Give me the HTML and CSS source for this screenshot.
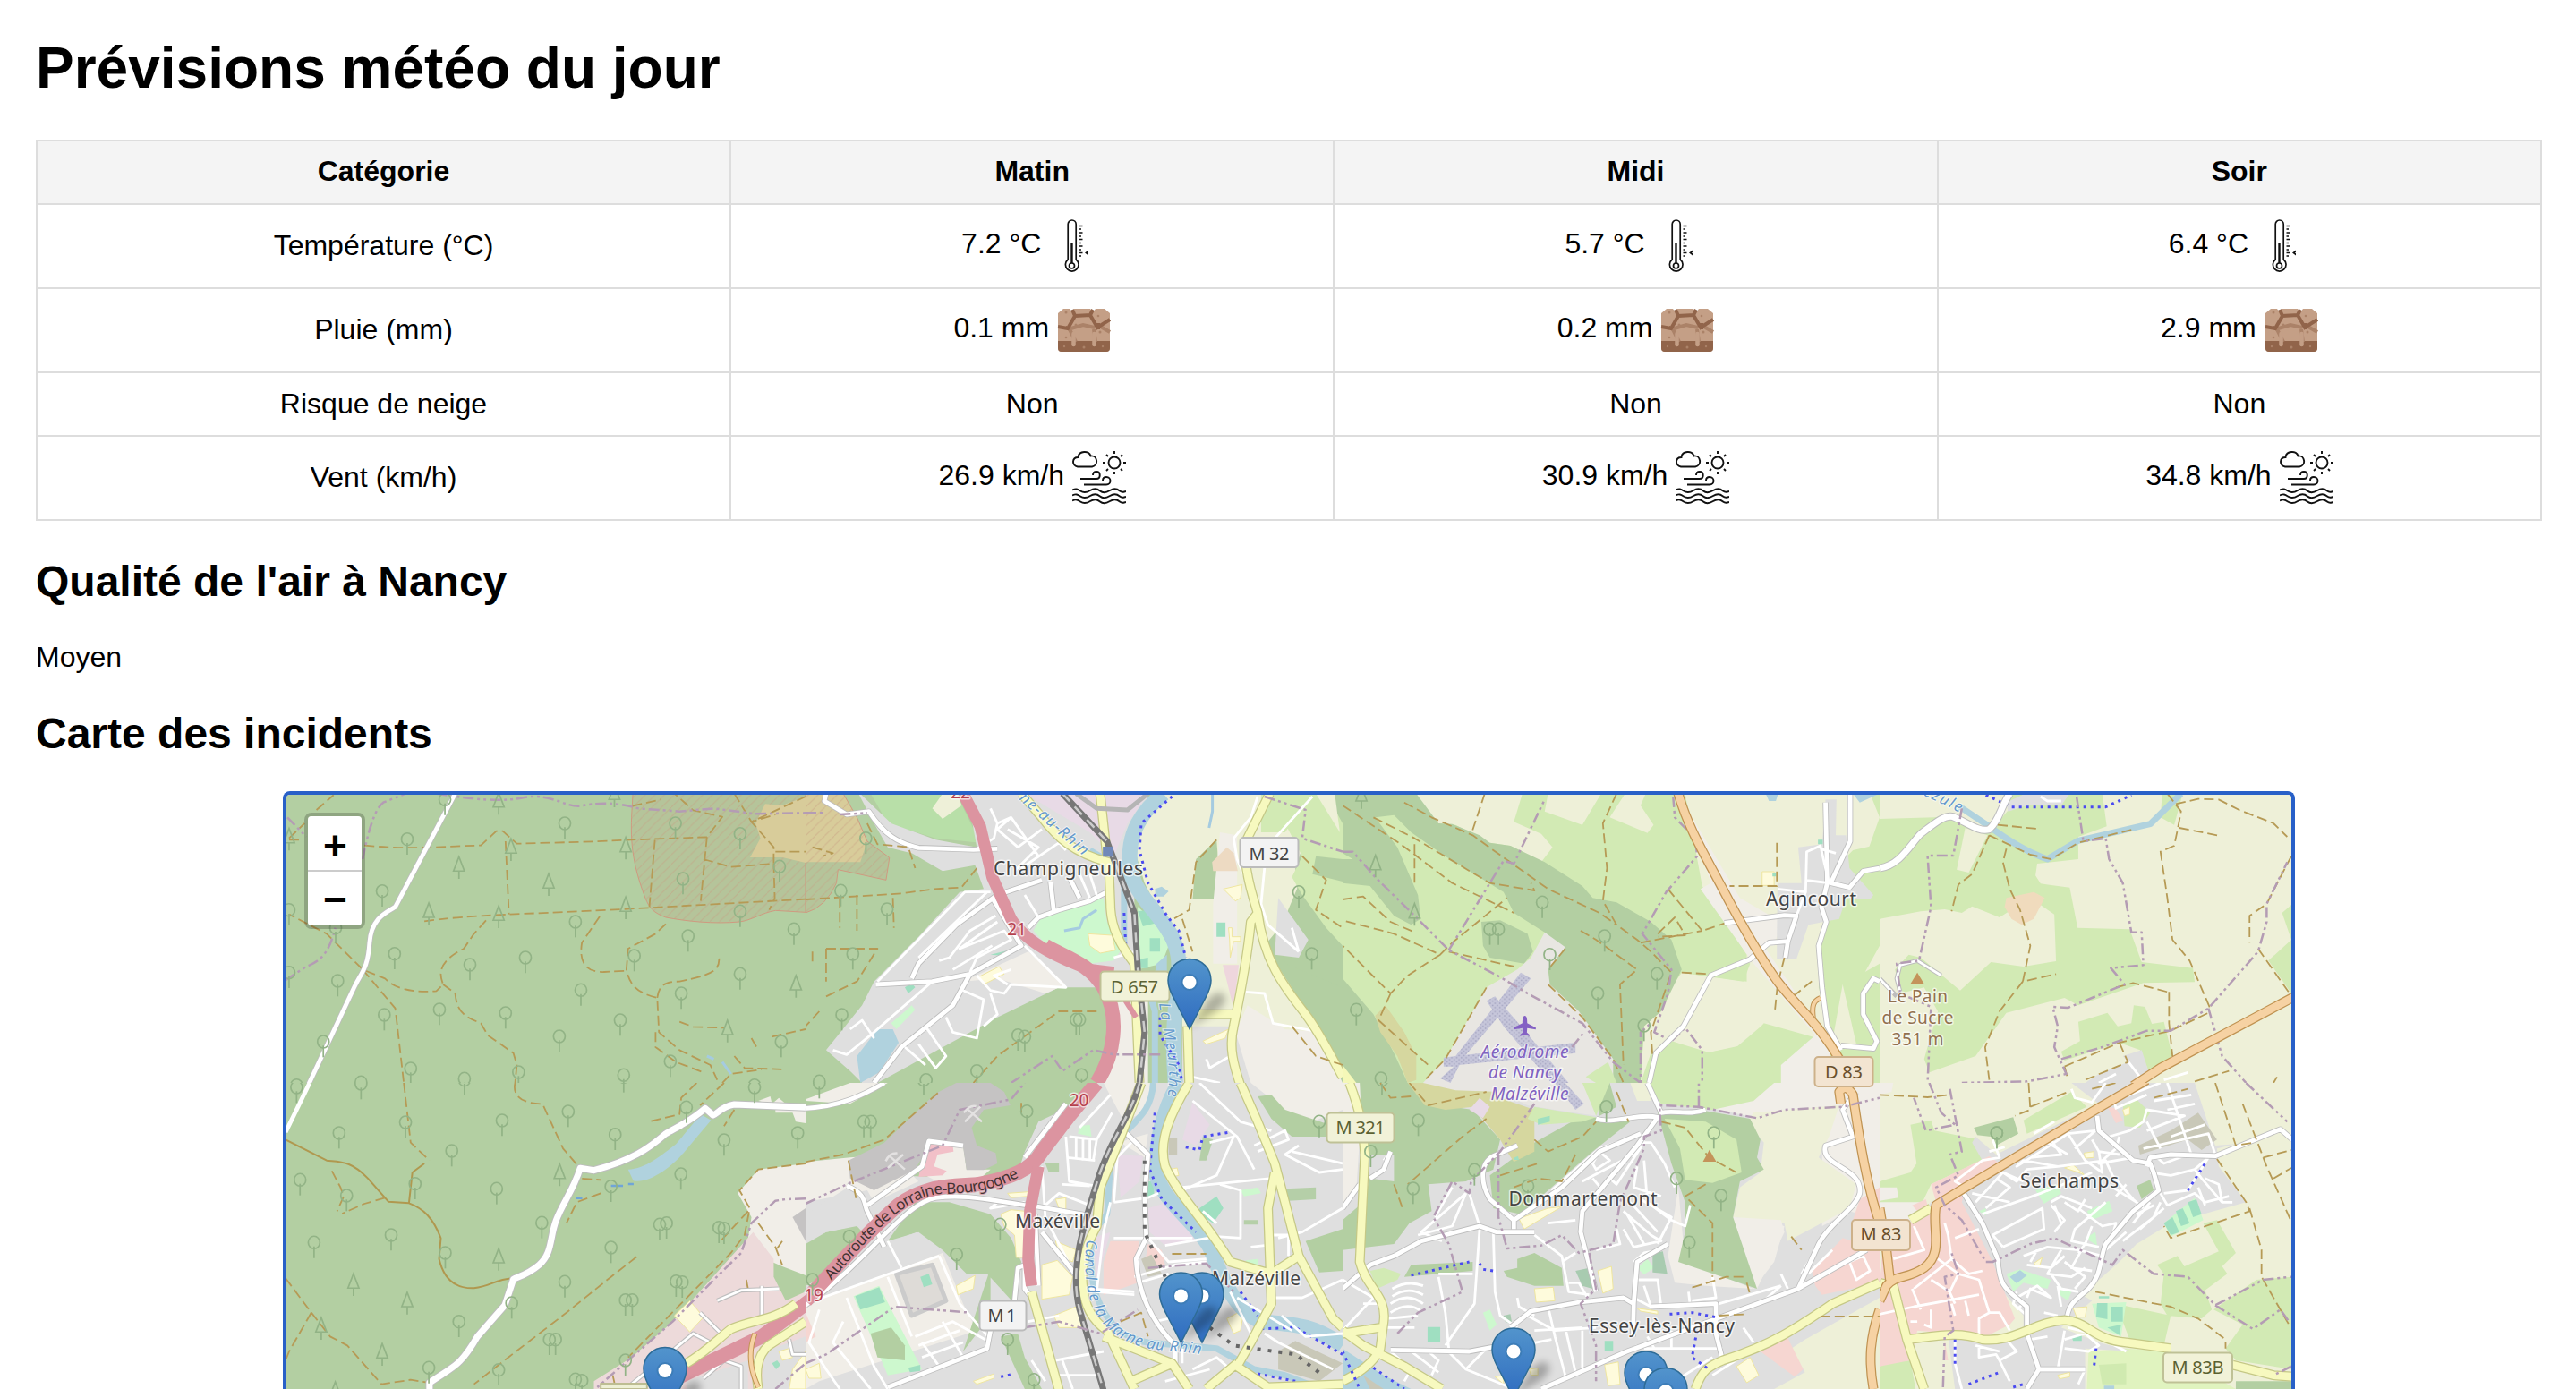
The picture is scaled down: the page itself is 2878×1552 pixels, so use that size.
FILE: index.html
```html
<!DOCTYPE html>
<html lang="fr">
<head>
<meta charset="utf-8">
<title>Prévisions météo du jour</title>
<link rel="stylesheet" href="styles.css">
</head>
<body>
<svg class="sprite" aria-hidden="true">
  <defs>
    <symbol id="thermo" viewBox="1.5 0 60 60">
      <g fill="none" stroke="#111" stroke-width="1.7">
        <path d="M22.7 45V5.500a4.500 4.500 0 0 1 9 0V45a7.300 7.300 0 1 1-9 0z"/>
        <circle cx="27" cy="52" r="3"/><path d="M27 26v23" stroke-width="2.400"/>
        <path d="M35 7.500h4M35 11h2.500M35 15h4M35 19h2.500M35 22.500h4M35 26.500h2.500M35 30h4M35 34h2.500M35 37.500h4M35 41h2.500"/>
      </g>
      <path d="M41.500 37.500l4-3v2.200l-1 .8 1 .8v2.200z" fill="#111"/>
    </symbol>
    <symbol id="soil" viewBox="0 0 60 60">
      <path d="M1 11L7 6H53L59 11V50a4 4 0 0 1-4 4H5a4 4 0 0 1-4-4z" fill="#c49f86"/>
      <path d="M1 42H59V50a4 4 0 0 1-4 4H5a4 4 0 0 1-4-4z" fill="#91644a"/>
      <path d="M14 6h5l-2 4zM37 6h6l-3 4z" fill="#fff"/>
      <path d="M13 27l8 16M41 29l2 14M12 29l17-5 13 3M47 25l12 7" fill="none" stroke="#ab8268" stroke-width="4"/>
      <path d="M1 26l11 2 8-14 17-1 8 14 14-9M20 14l-3-7M37 13l3-6M12 26l-2 3M46 22v7" fill="none" stroke="#91644a" stroke-width="4"/>
      <path d="M18.500 34v12M41.500 34v12" stroke="#c49f86" stroke-width="4.500" stroke-linecap="round"/>
      <g fill="#ab8268"><circle cx="10" cy="10" r="1.500"/><circle cx="46" cy="14" r="1.300"/><circle cx="21" cy="24" r="1.500"/><circle cx="48" cy="32" r="1.500"/><circle cx="10" cy="38" r="1.300"/><circle cx="8" cy="48" r="1.200"/><circle cx="30" cy="49" r="1.500"/><circle cx="51" cy="48" r="1.200"/></g>
    </symbol>
    <symbol id="wind" viewBox="0 0 60 60">
      <g fill="none" stroke="#111" stroke-width="1.900">
        <path d="M6 17.500C-1 16-.5 7 6.500 7C7-.5 19-1 20.500 5.500C28 4.500 30 16 22 17.500z"/>
        <circle cx="47" cy="13" r="6.500"/>
        <path d="M47 0v3M47 23v3M34 13h3M57 13h3M38 4l2 2M56 4l-2 2M38 22l2-2M56 22l-2-2M9 31H27c5 0 5-8 0-8q-4 0-4 4M13 37.500H38c6 0 6-8.500 0-8.500q-4 0-4 4"/>
        <path id="wave" d="M0 43.500c4-2 6-1 9 1s7 2 11-.5 8-2 11 .5 7 2 11-.5 8-2 11 .5 4 1 7 .5"/>
        <use href="#wave" y="6"/><use href="#wave" y="12"/>
      </g>
    </symbol>
    <linearGradient id="pin" x2="0" y2="1"><stop offset="0" stop-color="#5294cc"/><stop offset="1" stop-color="#2f6cc0"/></linearGradient>
    <filter id="soft" x="-1" y="-1" width="3" height="3"><feGaussianBlur stdDeviation="4"/></filter>
    <marker id="tree" markerUnits="userSpaceOnUse" markerWidth="60" markerHeight="100" refX="30" refY="40" overflow="visible"><ellipse cx="30" cy="40" rx="17" ry="21" class="tree"/><path d="M30 53v39" class="tree"/></marker>
    <marker id="fir" markerUnits="userSpaceOnUse" markerWidth="60" markerHeight="100" refX="30" refY="40" overflow="visible"><path d="M30 12L14 60H46zM30 60v26" class="tree"/></marker>
    <pattern id="hatch" width="28" height="32" patternUnits="userSpaceOnUse"><path d="M-4 36L32-4" stroke="#c89c80" stroke-opacity=".45" stroke-width="3"/></pattern>
    <pattern id="apron" width="14" height="14" patternUnits="userSpaceOnUse"><path d="M0 0h14v14H0z" fill="#c6c6da"/><path d="M2 2h4v4H2zM9 9h4v4H9z" fill="#a4a4c0"/></pattern>
  </defs>
</svg>

<h1>Prévisions météo du jour</h1>
<table class="forecast">
  <colgroup><col class="label-col"><col><col><col></colgroup>
  <thead><tr><th>Catégorie</th><th>Matin</th><th>Midi</th><th>Soir</th></tr></thead>
  <tbody>
    <tr class="tall"><td>Température (°C)</td><td>7.2 °C <svg class="icon"><use href="#thermo"/></svg></td><td>5.7 °C <svg class="icon"><use href="#thermo"/></svg></td><td>6.4 °C <svg class="icon"><use href="#thermo"/></svg></td></tr>
    <tr class="tall"><td>Pluie (mm)</td><td>0.1 mm <svg class="icon"><use href="#soil"/></svg></td><td>0.2 mm <svg class="icon"><use href="#soil"/></svg></td><td>2.9 mm <svg class="icon"><use href="#soil"/></svg></td></tr>
    <tr><td>Risque de neige</td><td>Non</td><td>Non</td><td>Non</td></tr>
    <tr class="tall"><td>Vent (km/h)</td><td>26.9 km/h <svg class="icon"><use href="#wind"/></svg></td><td>30.9 km/h <svg class="icon"><use href="#wind"/></svg></td><td>34.8 km/h <svg class="icon"><use href="#wind"/></svg></td></tr>
  </tbody>
</table>
<h2>Qualité de l'air à Nancy</h2>
<p>Moyen</p>
<h2>Carte des incidents</h2>

<div class="map">
<svg class="map-canvas" viewBox="320 888 2240 664">

<!-- north-west: forest -->
<svg class="tile" x="300" y="870" width="600" height="340" viewBox="0 0 1568 1020" preserveAspectRatio="none">
  <path class="forest" d="M0 0H1568V1020H0z"/>
  <path class="quarry" d="M1066 0H1568V448L1480 442C1440 450 1410 475 1375 480C1300 488 1220 478 1160 465C1125 450 1112 435 1100 400C1060 280 1055 200 1062 90z"/>
  <path d="M1066 0H1568V448L1480 442C1440 450 1410 475 1375 480C1300 488 1220 478 1160 465C1125 450 1112 435 1100 400C1060 280 1055 200 1062 90z" fill="url(#hatch)" stroke="#cf9a80" stroke-width="1"/>
  <path d="M1568 60L1500 90L1450 85L1422 150L1436 200L1406 264H1500L1568 282z" fill="#d8cc9a"/>
  <path class="trail" d="M280 224C420 240 540 225 620 224L665 176H684L725 218C850 214 950 212 1040 206L1280 196L1325 128L1240 106L1185 50M692 210L702 455M455 478C600 455 750 455 1030 438L1568 404M635 475L600 520L570 570C500 610 495 650 510 690L490 712C420 718 370 705 340 670L275 640L170 520L60 455M510 690L545 720C550 790 580 800 620 820L640 860L715 920L725 960L720 1020M275 640L370 770L395 1020M967 462L915 550C905 620 930 650 980 648L1050 644M1160 487L1130 520L1050 570L1045 640C1055 700 1085 720 1135 735L1140 850L1200 910L1290 960L1310 1010M1135 735C1140 690 1160 680 1200 680C1280 660 1320 650 1315 600M1130 850L1130 900L1190 950L1270 985M1200 815L1240 832L1330 835M1410 870L1425 900M1360 930L1390 970L1510 975M1325 1020L1350 990L1440 975M1470 865L1568 840M1128 206L1112 430M1280 196L1262 410M1270 270L1350 296L1475 285V230L1410 145L1568 60M1475 285L1478 400L1462 440M1360 50L1410 145L1480 120M140 105L190 55M60 205L100 205M60 200L105 150M1062 92L1145 70M1480 245H1568"/>
  <path class="limit" d="M55 130L110 195M50 675L110 630C160 610 180 570 195 500M275 270C290 180 310 100 335 80L400 50M490 50C600 70 680 80 750 62C830 50 860 95 910 92C960 80 1010 78 1080 100L1200 110L1300 100L1420 118L1568 115"/>
  <defs><path id="ra" d="M545 50L370 430C340 450 300 470 295 550C290 640 270 650 250 700L115 1030"/></defs><use href="#ra" class="case minor"/><use href="#ra" class="road minor"/>
  <path class="stream" d="M1280 930L1300 940M1325 950L1350 990"/>
  <path class="trees" d="M515 70L405 203L865 150L1188 150L1377 185L332 377L60 440L196 500L368 587L588 624L750 600L896 480L1210 336L1492 295L1377 445L1225 528L1068 594L1534 505L1377 655L912 709L1205 720L202 678L60 650L338 792L499 774L692 786L1027 810L849 864L160 882L1497 882L1173 948L415 972L270 1018L572 1006L730 984L1037 994L82 1028L1419 1028"/>
  <path class="firs" d="M672 75L60 195L708 230L1043 225L556 290L818 347L468 445L672 455L1043 425L1540 688L1340 838L1010 50"/>
</svg>

<!-- Champigneulles -->
<svg class="tile" x="900" y="870" width="600" height="340" viewBox="0 0 1568 1020" preserveAspectRatio="none">
  <path class="forest" d="M0 0H1568V1020H0z"/>
  <path class="quarry" d="M0 50H110L150 130L180 210L245 265L235 340L95 305L90 350Q60 430 0 450z"/>
  <path d="M0 50H110L150 130L180 210L160 280H0z" fill="#d8cc9a"/><path d="M0 50H110L150 130L180 210L245 265L235 340L95 305L90 350Q60 430 0 450z" fill="url(#hatch)" stroke="#cf9a80"/>
  <path fill="#b8dfa8" d="M190 50H440L510 215L380 200L240 150z"/>
  <path class="farm" d="M400 50H445L455 90L400 135L370 100z"/>
  <path class="urban" d="M150 40L250 150L380 205L500 230L470 40H1000L960 330L960 700L740 700L560 800L210 1020H165L130 980L60 910L165 760L200 680L330 530L450 380L520 370L495 290L400 310L310 250L240 230L200 150z"/>
  <path class="indus" d="M640 50H1000L940 150L900 260L830 180z"/>
  <path class="land" d="M460 680L650 580L760 690L700 720L560 670z"/>
  <path class="farm" d="M1030 50H1568V260L1460 200L1430 300L1440 420L1340 560L1470 790L1500 1020H1100V600L990 350L950 200z"/>
  <path class="forest" d="M1200 205L1212 380L1208 405H1130L1140 270zM1450 50H1568V700L1400 620L1380 520L1460 300z"/>
  <path class="grass" d="M1330 50H1480L1400 180L1330 180zM1400 150L1470 50H1520L1568 150V560L1520 500L1450 390L1420 330L1450 260z"/>
  <path class="forest" d="M1490 260L1568 270V345L1480 320z"/>
  <path class="farm" d="M1490 50H1545L1560 180z"/>
  <path class="land" d="M1210 180L1260 190V620H1190L1190 420zM1120 840H1260L1290 760L1400 840L1500 850L1568 1020H1120zM910 750L1000 740V1020H870z"/>
  <path class="urban" d="M1100 830H1250L1300 1020H1100zM1380 400L1468 540L1440 600L1370 590z"/>
  <path fill="#eddac2" d="M1230 230L1250 250L1262 310H1190L1187 280z"/><path fill="#eed6dd" d="M1218 625H1265L1250 770z"/>
  <path class="park" d="M665 510L690 460L800 420L870 400L880 480L930 560L900 610L830 620L730 590zM970 430L1020 480L1060 560L1040 620L970 640z"/>
  <path class="school" d="M825 520L895 525L905 575L860 585L830 560zM1220 370L1275 355L1270 400L1255 410zM1235 500H1245V530H1270V545H1250L1240 600L1238 540zM505 665L565 630L580 655L520 690zM1160 880L1235 840L1225 870L1170 890z"/>
  <path class="pitch" d="M970 445L1000 440L1020 485L985 495zM1005 535H1035V580H1005zM975 605L1000 600V635H980zM1200 482H1226V530H1200zM540 590L610 570L620 560L590 595zM290 700L310 685L320 700L300 720z"/>
  <path class="park" d="M250 820L310 760L320 775L265 840z"/>
  <path class="water" d="M210 840H255L272 885L215 985L160 1020L150 930zM1025 620L1055 590V650H1020zM1020 370L1040 362L1060 378L1045 395L1022 395z"/>
  <path class="river" d="M1045 50C960 130 930 220 955 330C970 400 1060 480 1080 560C1110 650 1060 760 1080 1020"/>
  <path class="canal" d="M830 240L930 310V580M1000 700L1020 780V1020"/>
  <path class="stream" d="M850 440L810 470L800 500L755 510M1188 50V110L1178 165"/>
  <path class="cycle" d="M1070 60L980 150L975 240L1000 350L1055 460L1090 510L1110 600M930 450L935 560L960 640M1035 800V860L1090 960L1100 1020"/>
  <defs><path id="rb" d="M60 50L55 75L120 120L185 110C230 190 270 215 330 232L490 238L560 235M690 340L560 390L440 490L330 620L310 670M205 690L370 680L480 655L630 560L545 400M480 655L430 760L280 900L200 1020M650 500L680 465L740 440L830 410L880 380M715 345L725 445M770 330L800 400"/></defs><use href="#rb" class="case minor"/><use href="#rb" class="road minor"/>
  <path class="lane" d="M540 100L560 150L600 130L680 260M560 150L550 200L500 235M600 130L560 170L620 230L690 170M630 300L740 215L760 240M590 170L680 230L610 310M540 380H465L210 680M530 380L330 600M640 390L680 465M800 320L830 400M830 320L850 390M555 460L480 510L420 600L390 610M560 480L450 570L580 510L600 540L500 600L480 650M545 560L430 640M640 560L760 700L600 690L580 720L540 710L500 660M600 640L550 660L590 690M370 680L200 850L120 925L80 910M130 840L165 810L200 870M460 710L520 740L500 870L430 850L410 800M540 720L560 790L520 830M350 830L410 930L380 970L330 890M290 900L350 960M900 600L960 580M1320 60L1300 130L1250 200L1260 270L1290 350M1480 60L1370 200L1340 300L1330 420L1350 490L1440 580M1420 500L1440 580M1285 715L1340 720L1365 820L1480 845M1170 940L1180 970L1240 930M1130 1000L1210 1020"/>
  <defs><path id="yb" d="M630 50L690 130C730 190 780 250 885 280L890 420C890 500 920 560 960 620L975 1020M860 50L880 260M1355 50L1290 200C1275 260 1290 340 1320 450C1340 620 1400 700 1460 790C1500 850 1530 920 1568 1000M1320 450L1300 480C1290 600 1270 720 1250 830C1235 900 1250 960 1270 1030M1115 830L1120 1020M1150 790H1250"/></defs><use href="#yb" class="casey mid"/><use href="#yb" class="yel mid"/>
  <path class="motor" d="M460 50L510 160L545 330L600 470C650 560 760 610 830 640L900 650"/><path class="motor wide" d="M700 560C760 600 830 620 870 700C920 800 900 930 850 1020"/><path class="motor thin" d="M910 700L965 800"/>
  <path class="rail" d="M750 50L880 210L920 330L960 450L970 640L990 850L975 1020"/><path class="raildash" d="M750 50L880 210L920 330L960 450L970 640L990 850L975 1020"/>
  <path class="grayrail" d="M790 50L850 100L940 105L1000 50"/><path fill="#7088b8" d="M868 228H898V262H868z"/>
  <path class="trail" d="M0 405L280 385L375 370L455 365L500 300M180 150L210 220L300 230L320 300M100 400V500M150 390V510M255 400L258 500M20 580V620M60 570V680M60 570H210L150 680L60 730M40 780L0 830M1200 205L1140 280L1120 440L1075 470M1100 470L1130 580M1450 260L1520 340L1490 440L1568 500M850 780L740 780L560 930L490 1020M1420 830L1490 930L1568 960M20 230L80 250L50 260"/>
  <path class="limit" d="M0 115H60M100 120L180 115M600 1020L720 930L750 980L840 910L900 925H1040M1340 60L1460 105L1450 200L1568 245"/>
  <path class="trees" d="M103 376L238 438L138 588L106 792L176 200L1440 380L1478 588L640 865L620 860L800 808L790 808L500 980L806 994L40 1015L352 1010"/>
</svg>

<!-- plateau de Malzéville, Agincourt -->
<svg class="tile" x="1500" y="870" width="600" height="340" viewBox="0 0 1568 1020" preserveAspectRatio="none">
  <path class="grass" d="M0 0H1568V1020H0z"/>
  <path class="farm" d="M210 50H525L500 145L580 185L613 230L580 280L490 225L430 215L330 155L280 150L210 90zM600 50H755L700 155L590 110zM825 50H885L870 90L908 155L890 182L780 130zM1000 50H1540L1568 130L1500 350L1568 480V620L1460 690L1500 890L1450 890L1230 820L1180 890L1060 920L960 880L900 920L870 1020L880 830L990 650L1180 680L1180 590L1050 360z"/>
  <path class="grass" d="M1440 300L1490 240L1568 220V560L1510 680L1460 690L1430 880L1390 700L1400 500zM1050 360L1160 580L1190 620L1170 680L990 650L970 545L1115 480zM1230 822L1262 1020H900L960 880L1070 918L1150 900z"/>
  <path class="land" d="M1000 90L1160 400L1280 480L1260 560L1230 560L1430 900L1400 1020H1280V960L1380 860L1200 620L1045 370L1075 350z"/>
  <path class="forest" d="M0 50H215L280 150L320 152L400 190L430 215L490 225L590 280L700 360L730 400L800 415L900 480L960 540L990 640L930 780L880 830L870 1020H800L700 830L600 690L590 640L645 570L590 515L500 450L470 380L300 260L200 180L150 122L95 130L160 230L220 390L228 470L200 490L150 460L80 360L0 350V270L30 270L0 250zM405 480L460 475L540 520L556 580L530 620L430 600L410 560zM0 670L90 790L150 920L190 1020H0z"/>
  <path fill="#d6d79f" d="M95 795L125 760L180 850L215 930V1010L190 1020L160 930L110 850z"/>
  <path d="M0 960L40 1020H0z" fill="#f5f8b8"/>
  <path class="aero" d="M590 515L650 565L600 640L605 690L690 780L790 940V1020H235L300 940L400 740L420 700L510 640L550 600z"/>
  <path class="grass" d="M775 950L800 1020H740L710 1000z"/>
  <path fill="url(#apron)" d="M520 650L550 670L350 940L315 1020L285 1005L325 965L295 965V935L330 930zM420 745L445 730L510 815L660 1020H610L470 830z M330 930L680 885V920L340 960z"/>
  <path class="urban" d="M1410 70H1442L1440 190L1470 190L1480 300L1550 390L1540 405L1470 400L1450 470L1360 490L1325 605H1268V530L1270 350H1340L1330 230L1400 220z"/>
  <path class="school" d="M1225 312H1260V358H1225z"/><path class="pitch" d="M1388 205H1402V220H1388zM1255 315H1266V328H1255z"/>
  <path class="water" d="M1235 50H1272L1265 75H1245zM1490 50H1568L1510 80z"/>
  <path class="trail" d="M415 50L378 178M0 90L170 220L320 350L500 450M180 80L260 130L380 190L440 240L600 370L750 450L800 490M800 50L760 150L772 300L760 410L800 490L860 540L900 580L960 650L900 850L905 930M90 130L210 200L430 350L560 375L550 350M210 220V350M0 405L60 395L140 480L210 515M10 478L150 520L285 590L320 550L480 400M285 590L190 660L140 720L0 560M140 720L105 810L250 960M310 580L500 630M950 370L1050 510L1115 485M920 520L970 465L1000 525L920 530M870 550L1050 510M990 650L1075 655M695 510L740 540L860 640L810 690L820 960M1268 215V360H1130M1290 600L1270 690L1262 780M1315 730L1380 670M420 700L400 740L300 940L240 1010M600 690L700 800L790 940L820 1020M650 570L600 640"/>
  <path class="limit" d="M0 245L30 245L95 330L215 465L310 575L460 665L540 720L700 820L790 950L870 1020V850L900 820M310 575L430 350L470 275L500 285L590 70M965 60L970 130L1030 200L1035 260L945 380L875 520L960 640L950 720L910 850L960 880L1000 835L1050 910V1020M670 900L705 850"/>
  <defs><path id="rc" d="M1115 484L1290 458L1325 460L1300 545L1293 600M1300 545L1245 550L1190 605L1075 660L995 830L915 920L895 1020M1482 50V210L1425 350L1480 365L1520 310L1568 300M1410 80L1415 350M1415 350L1398 430L1412 480L1390 560L1400 700L1415 830L1455 910M1455 895L1550 905L1560 880L1520 790V720L1550 670L1568 680"/></defs><use href="#rc" class="case minor"/><use href="#rc" class="road minor"/>
  <path class="lane" d="M1350 340L1420 350L1395 225L1355 245L1352 380L1325 460M1270 370L1350 380M1395 235L1440 250"/>
  <path class="caseo thinr" d="M1375 810C1368 760 1375 745 1395 735"/><path class="orange thinr" d="M1375 810C1368 760 1375 745 1395 735"/>
  <defs><path id="oc" d="M980 50C1010 170 1060 260 1110 370C1160 480 1220 600 1270 680C1330 770 1390 820 1450 940"/></defs><use href="#oc" class="caseo mid"/><use href="#oc" class="orange mid"/>
  <path d="M532 795c6 0 7 12 7 25l25 15v6l-25-5-1 15 8 8v4l-14-4-14 4v-4l8-8-1-15-25 5v-6l25-15c0-13 1-25 7-25z" fill="#8461c4"/>
  <path class="trees" d="M583 415L765 528L745 720L918 655L40 775L430 505L455 505L880 828L112 1005L605 590"/><path class="firs" d="M55 55L96 285L210 447"/>
</svg>

<!-- Le Pain de Sucre -->
<svg class="tile" x="2100" y="870" width="600" height="340" viewBox="0 0 1568 1020" preserveAspectRatio="none">
  <path class="farm" d="M0 0H1568V1020H0z"/>
  <path class="grass" d="M0 135L160 130L220 120L320 180L380 100L360 50H650L663 160L580 195L580 270L460 285L455 325L470 352L555 365L578 500L730 505L765 615L915 635L920 682L770 685L580 760L540 735L370 785L280 930L145 985L130 940L170 780L130 700L60 720L45 640L85 590L120 600L235 710L325 615L420 630L515 612L510 455L440 400L350 465L270 428L240 450L190 438L120 445L0 470zM825 50H885L860 155L820 130zM580 815L665 785L695 830L735 820L742 760L775 765L795 822L830 815L855 930L785 980L760 910L700 885L540 945L530 915L585 880zM1175 450L1205 420V725L1135 610L1202 540z"/>
  <path class="farm" d="M250 165L315 190L260 315L225 305z"/>
  <path fill="#f0dbbd" d="M370 400L450 380L482 400L450 470L415 490L385 470L365 430z"/>
  <path class="urban" d="M425 50H555L530 90L430 90L375 110L370 80zM710 930L765 910L785 980L740 1020H600L640 990L725 950z"/>
  <path class="river narrow" d="M235 95L320 160C390 220 440 250 490 270L580 208L790 152L880 50"/>
  <path class="cycle" d="M310 55L385 95L660 95L735 55"/>
  <defs><path id="rd" d="M0 300C60 290 90 220 120 185C160 150 190 120 215 128C260 150 290 180 320 170C350 140 355 90 380 50"/></defs><use href="#rd" class="case mid"/><use href="#rd" class="road mid"/>
  <path class="case lane" d="M180 660L110 610L60 625L50 670L60 715M0 670L50 730"/><path class="lane" d="M180 660L110 610L60 625L50 670L60 715M0 670L40 720M470 60L490 75L530 75M640 1020L690 990M720 940L760 1000M830 1010L900 985"/>
  <path class="trail" d="M320 190L270 320L230 355L210 445M320 190L440 255L500 270L580 215L740 170M370 235L360 280L380 370L410 440L440 560L418 680L515 655M418 680L350 780L308 900L320 1010M840 50L880 110L870 170L860 225L820 245L840 400L855 540L905 610L965 770M875 165L995 192M865 85L930 68L990 70L1050 105L1150 150L1190 195M1202 260L1170 330L1130 420L1080 460V550M1105 570L1200 725M845 715V820L855 930M690 700L740 685L840 715M700 885L725 950L600 1010M540 965L700 885L850 845L960 785M540 965L550 1010M345 155L460 168M1160 1000L1150 1020M920 1015L1020 980"/>
  <path class="limit" d="M240 100L215 258H140L150 430L115 610L50 620L60 720L150 765L140 1020M575 60L595 210L660 200L670 270L710 350L735 515H765L770 625L675 635L715 690L550 768L505 765L520 830L510 900L545 990L430 1015L240 1020M530 940L650 900L780 845L850 845L960 770L1105 580L1130 480V420L1190 280M960 770L1000 930L1070 1020"/>
  <defs><path id="od" d="M740 1030L820 970L1225 722"/></defs><use href="#od" class="caseo mid"/><use href="#od" class="orange mid"/>
  <path class="peak" d="M110 650L131 690H89z"/>
</svg>

<!-- west: forest road -->
<svg class="tile" x="300" y="1210" width="600" height="342" viewBox="0 0 1568 1026" preserveAspectRatio="none">
  <path class="forest" d="M0 0H1568V1026H0z"/>
  <path class="land" d="M1568 270L1430 290L1370 370L1410 450L1395 560L1470 600L1500 615L1568 645z"/><path fill="#eddada" d="M1415 500L1475 590V650L1510 730L1568 700V1026H950V1000L1060 920L1180 800L1290 660z"/>
  <path class="land" d="M1430 60L1465 45L1470 70L1490 50L1510 70L1568 75V135L1540 130L1530 100H1480V75z"/>
  <path d="M1530 450L1568 420V530z" fill="#c5c3c3"/>
  <path class="urban" d="M1220 1000L1400 930L1400 1026H1220zM1450 900L1568 850V1026H1440z"/>
  <path class="school" d="M1185 780L1230 730L1270 785L1230 835zM1490 900L1520 890L1530 920L1500 930zM1530 960L1568 900V1026H1520z"/><path class="pitch" d="M1470 940L1485 930L1495 945L1482 960z"/>
  <path class="water" d="M1262 105L1292 125L1215 230C1180 280 1110 340 1065 328L1050 290C1100 290 1150 240 1190 205z"/>
  <path class="bluedash" d="M1000 345H1035M1050 339H1066M898 386H916"/>
  <path class="track" d="M50 190L170 260C210 265 240 260 290 320L350 398L410 403C450 420 480 450 503 520L498 590C510 650 540 690 600 688C650 680 660 660 712 655M410 403L420 300L455 270"/>
  <path class="trail" d="M395 0L415 200L470 260M720 0C710 50 750 70 800 70L860 220L905 280L905 320L970 325M970 370L900 400L870 470M185 295L210 350L220 380L200 430M340 385L280 405L215 438M1250 0L1205 50L1200 105L1110 130M1330 0L1260 75M1360 90L1330 145M1568 270L1430 290L1375 360L1405 420L1390 510L1350 570L1050 920M1075 583L1000 650L870 770L700 920L600 1010M50 655L125 770L60 900L50 930M125 770L180 850L230 880L330 1010L415 995L470 1005M1400 430L1320 530M1430 470L1480 550L1500 610M1500 530L1485 555M1395 660L1400 690M1005 980L1010 1005"/>
  <path class="limit" d="M1568 388L1510 390L1480 395L1410 470L1380 570L1300 660L1180 800L960 1020M1480 1026L1568 940"/>
  <path class="road minor" d="M50 165L120 0"/>
  <defs><path id="re" d="M1568 82L1360 72C1320 80 1310 105 1298 108L1275 85C1230 130 1190 150 1160 170C1110 220 1060 260 950 293L910 286C890 360 860 400 840 460C820 520 830 570 790 610C760 640 730 650 715 658L690 745L610 850C560 950 540 950 470 1005V1030"/></defs><use href="#re" class="case mid"/><use href="#re" class="road mid"/>
  <path class="lane case" d="M1310 730L1380 695L1490 690M1440 680V790M1260 770L1330 850M1060 1010L1240 840L1290 870M1520 860L1530 910L1568 910M1270 990L1330 930L1380 950V1026"/><path class="lane" d="M1310 730L1380 695L1490 690M1440 680V790M1260 770L1330 850M1060 1010L1240 840L1290 870M1520 860L1530 910L1568 910M1270 990L1330 930L1380 950V1026"/>
  <path class="motor wide" d="M1200 985L1440 850L1580 730"/>
  <defs><path id="ye" d="M1220 940C1280 900 1310 860 1350 825C1420 790 1470 800 1540 740M1430 1026C1420 960 1430 910 1460 880L1568 800"/></defs><use href="#ye" class="casey mid"/><use href="#ye" class="yel mid"/>
  <path class="caseo thinr" d="M1420 840C1400 900 1405 960 1430 1020"/><path class="orange thinr" d="M1420 840C1400 900 1405 960 1430 1020"/>
  <path d="M970 1008H1105V1026H970z" fill="#eef0d5" stroke="#bdbd92" stroke-width="2"/>
  <path class="trees" d="M82 15L270 3L572 -10L206 168L400 132L682 126L875 96L1037 -20L1220 82L1419 15L1012 173L1330 192L1545 168L535 228L92 325L228 378L428 338L666 355L1000 347L1204 306L798 469L1142 475L1162 470L1315 485L1330 488L133 535L358 510L516 570L1000 552L865 667L1190 665L1208 668L710 738L1042 728L1062 728L556 800L820 860L838 860L468 955L672 962L1042 930L896 994L915 998"/><path class="firs" d="M850 300L672 583L248 668L405 730L154 815L332 902L195 1030"/>
</svg>

<!-- Maxéville, Malzéville -->
<svg class="tile" x="900" y="1210" width="600" height="342" viewBox="0 0 1568 1026" preserveAspectRatio="none">
  <path class="urban" d="M0 0H1568V1026H0z"/>
  <path class="forest" d="M0 0H840L790 70L680 130L640 230L620 300L500 320L0 300z"/>
  <path class="land" d="M0 60L130 70L240 0H130L0 55zM0 265L130 250L250 240L330 330L200 400L180 360L0 400zM350 310L360 200L460 210L470 290L540 290L500 330L400 340zM0 740L400 570L460 740L500 830L40 1000L0 1026zM1300 0H1568V90L1480 130L1400 90zM940 190L1000 170L990 250L920 200zM870 0H1010L1000 90L930 130z"/>
  <path fill="#c5c3c3" d="M380 35L440 0H540L580 30L598 75L520 90L485 150L500 210L555 235L560 270L520 292H470L460 215L380 200L350 230L320 290L200 360L130 320L125 260L230 200L330 90z"/>
  <path fill="#f2c0c8" d="M345 240L365 205L430 210L432 230L385 240L375 280L412 295L400 310L330 315z"/>
  <path class="forest" d="M240 530L320 400L420 400L540 440L600 520L630 600L610 740L530 640L470 640L400 560L330 500zM0 540L60 500L150 480L190 530L70 640L0 680zM460 900L540 620V780zM570 850L620 840L640 920L690 1026H640zM1320 45L1360 40L1400 90L1530 140L1568 180H1420L1360 120zM1460 530L1568 490V630L1500 635z"/>
  <path class="urban" d="M230 540L325 500L360 580L270 620zM0 440L130 345L170 400L180 470L60 500L0 530z"/>
  <path class="indus" d="M910 240L985 245L975 330L920 385zM1000 420L1060 400L1150 520L1050 545L1005 500zM1130 65L1180 140L1140 210L1100 190zM840 520L890 500L850 660z"/>
  <path class="retail" d="M890 530L975 530L960 610L970 670L870 710V600zM1000 540L1040 560L1050 610H990zM0 770L30 850L0 870z"/>
  <path fill="#c9c8b8" d="M980 590L1010 575L1040 640L1000 650zM1380 900L1430 865L1568 940L1500 1000L1380 960zM1060 185H1085V240H1060z"/>
  <path class="school" d="M570 440L600 425L640 430V585H615L610 510L580 480zM690 610L735 595L780 650L770 710L690 725zM440 680L495 645L490 690L445 710zM725 780L790 750L820 790L800 820L740 820zM730 530L790 560L780 600L740 580zM1230 790L1280 760L1270 830L1250 840zM0 960L40 940L45 990L10 990zM490 1000L550 975V990L500 1010zM1060 290L1085 285L1090 310L1070 315zM730 390L760 385V430L740 420zM590 370L650 365V380L600 385z"/>
  <path class="park" d="M140 715L215 680L340 960L240 980L180 820zM1270 360L1320 350L1330 370L1280 380zM800 145L830 140L835 180L795 170zM1285 595L1320 590V610L1290 615z"/>
  <path class="forest" d="M190 840L250 820L290 880V930L210 920z"/>
  <path class="pitch" d="M145 715L215 685L232 735L160 760zM335 650L360 640L370 675L345 685zM990 330H1018V380H990zM1150 420L1200 380L1220 420L1190 470L1150 440zM300 955L335 945V965L305 970z"/>
  <path fill="#b5cfa8" d="M1400 355L1490 350V390L1410 395zM700 270H740V300H710zM1280 460H1320V475H1280zM1160 180L1190 190L1170 260H1150z"/>
  <path d="M265 640L370 610L410 730L310 780z" fill="#dedbd7" stroke="#cbcbcb" stroke-width="5"/><path class="pitch" d="M335 650L360 640L370 675L345 685z"/>
  <path class="river" d="M1090 0C1040 100 1030 180 1020 290C1040 400 1130 450 1180 550C1210 640 1250 760 1330 800C1430 810 1480 810 1568 880"/>
  <path class="canal" d="M1015 0C1010 110 950 130 910 200C880 280 890 340 880 440L840 500C810 700 880 850 1000 870L1200 890L1310 960L1400 980L1470 1010"/>
  <path class="cycle" d="M1020 100L1005 290L1040 390L1140 500M1110 215L1150 225L1160 180L1240 165M1270 700L1320 780M1310 825L1430 820L1568 910M570 985L610 975M1320 975L1430 1000"/>
  <path class="lane" d="M760 180L770 330L870 350M770 180L850 190L840 260M765 250L845 260M790 185V250M810 185V260M830 185V260M890 40L800 150M895 100L850 190M1130 60L1260 180L1310 290M1150 0L1270 130L1360 160M1180 200L1250 180L1200 310L1100 360M1100 350L1360 320M1310 210L1400 160L1410 190L1320 230M1440 210L1400 240L1500 300L1568 290M1420 230L1568 270M1380 520L1450 500L1568 420M1360 720H1450L1568 660M900 520H1000L1130 520M890 400L870 500L850 700L960 710M900 400L1000 385L1030 370M900 400L910 250L960 190M960 650L1080 610L1170 600M970 670L1060 640M1050 545L1200 515L1270 520V360L1210 340M1000 520L1060 600L1170 590M700 410L740 370L830 410M690 280L700 450L780 630M750 340L830 345M1300 550L1340 545M1360 510H1410V580M1160 430L1200 470M560 400L540 420L640 400M240 650L310 850M390 580L450 740L540 860M0 740L390 580M240 530L280 620M120 720L200 950L240 1026M40 760L10 870L60 960L100 1026M110 800L80 870L190 1026M320 850L430 800L540 870M330 880L450 830M340 920L460 870M400 800L460 920M340 870L390 950M650 800L740 780M660 930L700 1000M730 930L870 900M740 980H850M750 930L780 1026M830 690L960 700M1020 800L1100 780M1130 960L1200 920L1230 950M1050 1000L1180 960M1100 890V940M1240 700L1300 840M1390 780L1460 850L1568 840M1340 840L1380 870L1540 960M1260 720L1420 830"/>
  <defs><path id="rf" d="M0 85C100 80 170 40 230 0M120 345C180 370 170 410 180 430L230 550M180 410L340 280L360 195L460 210M0 745C170 610 290 400 380 385C480 370 560 400 680 415L830 445M670 440L680 680M610 730L620 620L640 610L640 690L660 720M540 830L530 890L240 1020M920 150L1000 240L990 380L995 520L965 590C970 700 1010 800 1080 880V940M640 250L760 70M690 500L760 600L800 660"/></defs><use href="#rf" class="case minor"/><use href="#rf" class="road minor"/>
  <defs><path id="yf" d="M660 700L740 1030M980 0L920 180L860 350L850 480C790 600 790 760 880 830L960 1026M870 850L1070 940L1120 1026M950 1000L1070 940M1120 0C1060 110 1030 200 1050 280C1090 380 1160 450 1240 600L1360 640L1440 580M1270 0L1320 130L1370 270L1400 400L1440 580L1540 790L1568 820M1370 300L1350 420L1360 740L1300 870L1260 950L1350 1020L1568 1010M1260 940L1170 1026"/></defs><use href="#yf" class="casey mid"/><use href="#yf" class="yel mid"/>
  <path class="motor wide" d="M850 0L770 110L690 230C660 290 600 320 500 340C380 345 330 360 270 410C190 490 70 640 0 730"/><path class="motor" d="M680 280L655 430L650 590L660 680"/>
  <path class="rail" d="M975 0C950 110 900 170 860 300C810 480 770 620 800 760L870 1030"/><path class="raildash" d="M975 0C950 110 900 170 860 300C810 480 770 620 800 760L870 1030"/>
  <path class="dots" d="M990 260V500L1050 650M1180 820L1250 880L1430 910L1510 980"/>
  <path class="limit" d="M0 405L130 335L400 210L450 90L600 55L640 0M0 940L60 910L260 750L480 770M640 820L740 800L860 840L970 760M1000 620L1170 605L1250 700"/>
  <path class="trail" d="M0 265L110 240L230 190L390 30M125 260L150 400M630 100V60M920 800L980 770L1000 850M1070 573H1170"/>
  <g class="mine"><path d="M465 130L510 80M470 85L515 130M462 100Q480 72 498 78M240 285L285 240M245 245L290 290M234 262Q246 234 268 236"/></g>
  <path class="trees" d="M40 0L170 130L190 130L646 95L568 475L441 575L128 515L20 660L590 860L667 995L1500 130L345 -10"/>
</svg>

<!-- Dommartemont, Essey -->
<svg class="tile" x="1500" y="1210" width="600" height="342" viewBox="0 0 1568 1026" preserveAspectRatio="none">
  <path class="urban" d="M0 0H1568V1026H0z"/>
  <path class="land" d="M0 0H60L40 360L0 420zM980 350L1000 600L1200 690L1180 640L1140 450L1290 480L1260 600L1200 690L1060 680L970 670L950 580zM1400 0H1568V460L1480 430L1400 480zM1040 0H1400V80L1180 110L1060 80z"/>
  <path class="farm" d="M1200 100L1450 75L1420 180L1390 250L1500 340L1480 420L1300 530L1290 470L1140 450L1160 350L1220 300L1230 200L1180 130zM1350 860L1568 720V1026H1260L1350 970L1310 890zM840 0H890L900 60L860 60z"/>
  <path class="land" d="M1140 450L1280 460L1290 500L1210 690L1150 520z"/>
  <path class="forest" d="M50 0H200L260 70L380 90L460 190L440 290L360 330L250 340L260 430L195 470L150 540L0 560V460L60 400L80 320L150 330V240L60 240zM430 310L560 200L700 110L840 130L730 230L640 320L520 440L440 420zM920 100L1040 90L1190 120L1220 190L1210 250L1230 290L1160 330L1140 450L1210 690L980 600L1000 500V400L960 270zM510 590L560 570L640 620L645 680H560L480 650L470 630L510 620zM750 0H780L800 80L750 110zM200 610L380 600V630L180 650z"/>
  <path fill="#d6d79f" d="M190 0H420L460 50L560 90V230L500 265L480 230L460 190L380 80L300 90L240 75z"/>
  <path class="aero" d="M235 0H740V110L620 90L540 75L460 30L330 25z"/><path class="grass" d="M560 80L740 115L700 130L580 140L540 120zM700 0H780L740 110zM890 0H1260L1200 60L1080 90L930 70zM940 120L1060 130L1150 190L1165 300L1080 335L1000 325L985 220zM120 620L170 640L160 660L100 690L80 630z"/>
  <path fill="url(#apron)" d="M620 0H650L705 70L680 90z"/><path class="indus" d="M400 50L430 80L410 118L370 90z"/>
  <path class="park" d="M860 620L890 590L910 620L880 642zM410 770L430 760L450 810L430 830z"/><path class="pitch" d="M248 818H285V870H248zM765 865H790V900H765zM570 120L605 110V130L570 140zM498 252L512 245L515 258H502z"/>
  <path fill="#a8cbb0" d="M905 570L935 565L948 640L905 635zM680 630L720 620L730 690L700 680zM470 780L490 775L495 810L475 800z"/>
  <path class="school" d="M515 455L600 420L640 415L530 490zM745 630L785 615L790 690L760 705zM560 690L615 685L620 730L565 735zM765 945L805 935L810 1010L775 1015zM1150 950L1190 920L1215 980L1180 1005zM545 960L570 955V980H550zM860 755L920 765V775L870 765zM445 985L470 980V1010z"/>
  <path class="retail" d="M1370 630L1460 520L1568 560V670L1400 710L1380 680zM1510 390L1568 350V470L1490 460zM1220 900L1300 855L1345 960L1320 985z"/>
  <path class="water" d="M0 890L120 980L200 1026H0z"/><path fill="#c9c8b8" d="M60 980L120 1026H80z"/>
  <path class="lane" d="M320 350L270 450M360 370L230 500L290 530M360 370L320 480L220 510M370 370L400 480M440 500L445 700L460 780L510 820M400 490L385 740L300 880M280 640L380 640M280 650L300 770L310 890M145 690Q190 660 235 680M145 715Q190 680 235 710M140 740Q190 700 235 740M140 770Q190 730 230 765M130 790L220 780M110 820L210 820M560 510L640 580L660 700L720 710M660 670L690 670L715 720M640 600L680 570M610 360L750 220L870 170M730 270L750 230L780 260L740 290zM700 330L850 240L880 190M730 320L760 360M780 320L800 340L880 200L900 200L940 270L970 350M860 280L850 350L930 380M880 260L890 400L960 460L1000 480L1015 410M820 430L900 510L930 530L850 550L820 490M840 400L920 500M830 440L880 540M870 390L960 450L920 540M800 490L810 540L740 560M850 600L880 570L930 560M860 660L920 660L930 750M850 720L900 750L1100 740L1280 680M880 680L900 750M1010 700L1015 750M1020 730L1090 720L1080 650M540 780L620 830L740 820M600 750L620 850L650 980M560 830L700 820M520 880L610 860M650 820L680 970M700 830V970M880 890H1110M860 880L820 910M890 850L910 890M960 830V890M1090 740L1080 840M970 1000L1080 920M1080 980L1190 900M1230 730L1280 680M1280 640L1300 690M1170 820L1200 870M1480 600L1520 580L1540 630L1500 660zM200 900L280 970M250 900L280 930L260 980M300 890L360 960L500 1026M420 890L360 960M140 900L200 960L180 1000M0 660L90 720L0 830M60 740L110 740M120 260L140 230M1380 560L1340 640M1360 640L1430 560M600 470L680 460M510 720L515 750L560 780"/>
  <defs><path id="rg" d="M0 420L50 340M80 320L120 290L140 230M0 690L80 610L150 580L230 530L400 480L450 500L560 500M500 490V460L430 390C400 330 400 260 450 240L510 210M500 460L640 350L750 230L870 170M740 120C790 140 860 100 920 115L860 210L700 430L695 500L740 700M890 0L930 100C970 90 1010 110 1060 90M490 820L550 765L690 735L820 720L850 740L848 850M140 895L370 900L440 885M580 1026L830 900L1330 690L1530 560M850 740L860 600L950 540M1110 930L1090 840V740L900 750M1500 30L1460 90L1490 180L1410 210C1390 280 1520 280 1510 370C1500 420 1420 470 1390 540L1330 690"/></defs><use href="#rg" class="case minor"/><use href="#rg" class="road minor"/>
  <defs><path id="yg" d="M20 0C50 90 60 150 65 240L50 600C70 690 130 710 120 800L110 890C90 940 50 970 0 1000M0 840L110 820M0 830L60 880L180 950L290 1026M1030 1026C1050 960 1070 950 1110 930C1250 880 1330 820 1430 740L1568 670"/></defs><use href="#yg" class="casey mid"/><use href="#yg" class="yel mid"/>
  <defs><path id="og" d="M1455 70L1450 30Q1470 0 1490 40C1510 200 1530 340 1568 470M1568 760C1540 850 1535 930 1550 1026"/></defs><use href="#og" class="caseo mid"/><use href="#og" class="orange mid"/>
  <path class="cycle" d="M200 645L370 600M400 605L410 625L440 630M955 775L1020 770L1090 785M1035 830L1020 920L1070 960M0 900L50 1026M90 955L180 1026"/>
  <path class="trail" d="M195 0L250 75L420 30M420 120L350 180L250 280L190 340M150 340L175 420M560 190L600 230L700 180L740 130M460 310L570 270M500 350L570 320L640 330L680 240M930 130L1000 150L1070 250L1150 300M1060 340L1000 380L1080 470V650M1170 650H1120L1010 690M1180 670L1190 710M800 30L835 130M110 0L140 50L200 45M1395 783H1568M1310 515L1340 560M1100 780L1180 775"/>
  <path class="limit" d="M560 70L460 230L375 330L370 370L320 330L265 450L310 540L350 700L220 770L160 840M455 240V450L480 555L580 545L640 510L690 570L790 540L810 400L880 220V180L930 160L925 75L1040 80L1210 118L1290 90L1460 80L1568 50M1040 80V0M720 570L740 690L695 740L740 880V1000"/>
  <path class="peak" d="M1071 224L1091 264H1052z"/>
  <path class="trees" d="M221 126L206 354L82 230L385 292L541 346L1084 168L1105 378L1012 535L975 320L115 -10L770 80"/>
</svg>

<!-- Seichamps -->
<svg class="tile" x="2100" y="1210" width="600" height="342" viewBox="0 0 1568 1026" preserveAspectRatio="none">
  <path class="farm" d="M0 0H1568V1026H0z"/>
  <path class="grass" d="M90 140L150 125L160 160L290 190L315 250L150 340L100 460L0 455V330L90 300L108 270zM420 125L560 30L605 80L430 170zM945 470L985 460L1040 570L1000 615L1015 640L950 695L970 760L940 790L840 780L820 740L830 640L810 610L870 580L890 615L990 565zM690 740L850 780L830 880L730 860zM975 760L1100 660L1205 650V960L1040 930L1010 890L1060 810zM0 940L90 930L105 1026H0z"/>
  <path fill="#e0f3bf" d="M610 900L720 890L850 900L1040 1026H605z"/><path class="land" d="M0 0H40L35 30L0 40zM0 350L50 350L55 385L0 395zM0 400L130 400V460L0 500z"/>
  <path class="urban" d="M250 340L150 400L100 470L300 620L420 780L420 840L200 850L220 1026H600V890L740 900L640 870L530 820L620 730L590 710L700 600L750 540L850 470L1070 400L990 280L985 220L1040 205L980 210L920 0H560L640 70L340 240L280 180L270 200L300 260z"/>
  <path class="retail" d="M150 340L320 245L350 270L250 350L240 400L330 600L395 790L380 810L310 850L110 830L90 930L0 950V640L20 470L100 470L165 400zM95 410L135 390L140 410L110 430zM665 80L690 85L710 125L690 135zM190 860L200 930L190 930z"/>
  <path fill="#c9c8b8" d="M755 210L850 160L930 100L985 190L940 225L900 190L760 240z"/><path class="forest" d="M275 150L390 115L405 170L340 210L325 180L285 175zM750 345L790 325L800 360L765 390zM1040 1000H1205V1026H1040z"/><path fill="#d0eab0" d="M640 945L720 940V1010H650z"/>
  <path class="grass" d="M710 70L750 55L790 100L760 150L715 145z"/><path class="park" d="M455 360L520 340L530 370L480 405zM605 430L670 395L680 430L620 460zM600 520L630 500L635 545zM370 640L410 625L500 660L490 690L420 670L390 700zM520 680L560 700L550 730L525 710zM830 470L920 385L945 460L850 515zM620 740L720 735L705 850L640 820zM290 430L310 420V445z"/>
  <path class="pitch" d="M830 470L855 450L875 500L850 510zM865 430L885 420L905 470L880 480zM900 400L925 390L940 440L915 450zM635 738H665V792L632 785zM675 750H710V800H675zM665 820L705 810L700 845zM560 850L590 845V865H565zM640 715H670V722H640z"/>
  <path class="water" d="M380 650L410 628L430 645L400 672zM655 1015H685V1026H655z"/><path class="school" d="M540 285L565 275L600 310L580 300zM597 235L625 230V250L600 252zM450 605L475 585L465 620zM565 755L605 750L600 785L575 785zM710 90L730 80V105L715 110zM520 980L555 970V985L525 992z"/>
  <path class="lane" d="M780 40L690 85L685 60L820 0M840 0L910 240L880 240M930 0M800 60L910 40M840 90L920 70M780 160L890 110L780 90L770 130L730 160L670 180M780 130L820 220M850 180L950 140M770 220L960 170L980 240M560 20L570 50L620 65L660 0M450 170L510 130M330 190L350 250L300 260L220 330L250 350M320 230L365 215M630 160L550 170L470 230L400 280L420 260L520 280M550 170L600 260L650 300L640 230M630 160L570 220M500 190L530 240L440 250M490 200L550 240M620 190L640 230L700 240M700 180L690 220L640 270L740 250M520 280L430 290L400 330L360 300L280 400M520 280L660 260L680 310L740 390L770 420M620 300L580 320L470 370L300 440M340 320L380 350L310 420M360 300L420 330M270 370L380 400M360 550L480 490L475 420L330 510L360 550M500 400L530 380L620 420M510 410L530 470M540 400L580 430L600 390M500 410L540 460L510 500M660 400L570 490L560 530L640 550M580 420L650 480L690 470L680 510M620 480L600 540M680 350L750 400M690 380L720 340M790 400L740 470M820 400L800 450L710 530M830 420L760 490M800 410L750 440M660 560L720 500M800 240L830 270L900 240M790 300L850 310L920 290L940 320L1000 400L1030 400M920 290L960 250L900 360L830 370M820 370L840 410L920 370L950 400L1020 380M930 350L950 410M950 320L990 340L1000 400M420 580L490 550L580 560L650 580M430 610L500 620L540 580M460 560L440 600M530 560L490 640L560 650L600 620M540 600L600 650L570 690M590 560L560 620L620 630M600 540L580 570M500 640L530 690L580 700M430 720L440 690L500 720L460 680L400 720M520 680L530 750M390 720L420 740L400 760M400 700L390 740L430 780M220 520L290 490M190 470L200 510L210 590L100 690M100 480L130 560L40 590M170 590L230 640L205 700L150 660M230 640L290 660L320 770L290 790V850M210 590L260 640L300 630M0 775L100 750L290 710M95 690L120 760M150 760V820L130 810M210 740L220 780M250 730L260 780M320 770L350 770L380 830M200 690L220 740M90 800L110 800M280 880L350 900M290 880V920L340 910L350 930M370 860L400 900L350 930L380 1000M520 960H600L580 1010M540 830L520 960M540 860L600 840L640 880L610 900L540 890M550 820L620 840L720 900M440 860L490 850M480 770L520 780M220 850V940L240 1026"/>
  <defs><path id="rh" d="M240 360L300 470L345 590C350 690 370 690 430 750L430 840L465 960L430 1026M635 110L640 160L740 260L790 270L800 300L815 360L740 430L660 540C640 600 650 640 610 690C570 730 550 740 545 800M465 960H600M780 280L790 250L850 240L980 245L1170 155L1205 190"/></defs><use href="#rh" class="case minor"/><use href="#rh" class="road minor"/>
  <defs><path id="yh" d="M90 460L150 420M0 670L40 680L80 860L130 1026M80 860C160 850 230 830 300 860C400 870 450 800 540 795C610 800 620 860 720 870L850 890M1030 945L1150 980L1210 985"/></defs><use href="#yh" class="casey mid"/><use href="#yh" class="yel mid"/>
  <defs><path id="oh" d="M780 -10L630 90L250 350L165 410C150 480 190 570 130 620C80 660 50 640 20 680L0 730M0 420L20 560L30 660"/></defs><use href="#oh" class="caseo mid"/><use href="#oh" class="orange mid"/>
  <path class="trail" d="M0 40L140 48L200 40M435 0L440 90L395 110M440 80L550 30M620 20L690 0M980 0L1040 210L1090 200M1060 70L1130 280L1200 460M1120 250L1202 225M1150 320L1202 285M985 255L1070 400L1080 430L850 520L830 480M1080 420L1115 560V650L1200 820M630 700L850 750L930 790L1010 860V890M800 50L900 20"/>
  <path class="limit" d="M145 0L180 100L220 140L135 160L100 50M205 20L240 230L205 240L230 310L165 350L190 410L240 460L310 600L330 600L440 540L510 520L680 610L710 560L800 640L900 650L980 745L1120 660L1202 650M980 745L1090 825L1170 760L1195 800M185 1020L190 850L215 830L190 650L230 640L210 570M1070 0L1190 130M1202 950L1150 980"/>
  <path class="cycle" d="M632 890L625 960M220 860V950M260 1010L350 970M390 1020L420 1010M900 360L950 270"/><path class="trees" d="M342 168L342 168"/>
</svg>

<!-- road shields -->
<g class="shield">
  <g class="sw"><rect x="1385.500" y="936" width="65" height="33" rx="4"/><rect x="1094.500" y="1453.500" width="52" height="33" rx="4"/></g>
  <g class="sy"><rect x="1229.500" y="1085.500" width="77" height="33" rx="4"/><rect x="1482.500" y="1243.500" width="75" height="33" rx="4"/><rect x="2417" y="1511.500" width="77" height="33" rx="4"/></g>
  <g class="so"><rect x="2027.500" y="1181" width="65" height="33" rx="4"/><rect x="2069" y="1363" width="65" height="34" rx="4"/></g>
  <text x="1418" y="960.500" textLength="45">M 32</text><text x="1119.500" y="1477" textLength="32">M 1</text>
  <g fill="#5b6132"><text x="1267.500" y="1109.500" textLength="53">D 657</text><text x="1520" y="1266.500" textLength="55">M 321</text><text x="2455.500" y="1535" textLength="58">M 83B</text></g>
  <g fill="#6a4f2b"><text x="2060" y="1205" textLength="42">D 83</text><text x="2101.500" y="1386" textLength="46">M 83</text></g>
</g>
<g class="place">
  <text x="1193.500" y="977.500" textLength="167">Champigneulles</text><text x="2023.500" y="1011.500" textLength="101">Agincourt</text>
  <text x="1181.500" y="1372" textLength="95">Maxéville</text><text x="1403.500" y="1436" textLength="99">Malzéville</text>
  <text x="1768.500" y="1347" textLength="166">Dommartemont</text><text x="1856.500" y="1489" textLength="163">Essey-lès-Nancy</text><text x="2312" y="1326.500" textLength="110">Seichamps</text>
</g>
<g class="label hill"><text x="2142.500" y="1120" textLength="67">Le Pain</text><text x="2142.500" y="1143.700" textLength="80">de Sucre</text><text x="2142.500" y="1167.500" textLength="58">351 m</text></g>
<g class="label airfield"><text x="1703.500" y="1181.500" textLength="98">Aérodrome</text><text x="1703.500" y="1205" textLength="81">de Nancy</text><text x="1709" y="1228.500" textLength="87">Malzéville</text></g>
<g class="label exit"><text x="1073" y="892">22</text><text x="1136" y="1045">21</text><text x="1205.500" y="1236">20</text><text x="909" y="1454">19</text></g>
<path id="a31" d="M929 1431C975 1378 1010 1338 1050 1334C1090 1334 1115 1328 1145 1312" fill="none"/>
<text class="curve dark"><textPath href="#a31" textLength="250">Autoroute de Lorraine-Bourgogne</textPath></text>
<path id="canal" d="M1214 1385C1208 1440 1216 1495 1290 1508C1320 1511 1340 1511 1366 1519" fill="none"/>
<text class="curve blue"><textPath href="#canal" textLength="216">Canal de la Marne au Rhin</textPath></text>
<path id="meurthe" d="M1295 1121C1300 1160 1311 1190 1304 1228" fill="none"/><text class="curve blue"><textPath href="#meurthe" textLength="105">La Meurthe</textPath></text>
<path id="rhin" d="M1138 893L1212 958" fill="none"/><text class="curve blue"><textPath href="#rhin" textLength="96">ne-au-Rhin</textPath></text>
<path id="ezule" d="M2148 888L2192 909" fill="none"/><text class="curve blue"><textPath href="#ezule" textLength="46">ezule</textPath></text>

<!-- incident pins -->
<symbol id="marker" viewBox="0 0 110 90" overflow="visible">
  <path d="M25 78L46 46Q58 34 64 42Q68 50 54 60z" fill="#000" opacity=".27" filter="url(#soft)"/>
  <path d="M25 1C11 1 1 12 1 25C1 34 5 40 9 48L25 79L41 48C45 40 49 34 49 25C49 12 39 1 25 1z" fill="url(#pin)" stroke="#2e6c97" stroke-width="1.500"/>
  <circle cx="25" cy="27" r="8.500" fill="#fff" stroke="#3d7db8" stroke-width="2"/>
</symbol>
<g><use href="#marker" x="1304" y="1070.500" width="110" height="90"/><use href="#marker" x="1318" y="1421" width="110" height="90"/><use href="#marker" x="1294.500" y="1421" width="110" height="90"/><use href="#marker" x="718" y="1504.500" width="110" height="90"/><use href="#marker" x="1666" y="1483" width="110" height="90"/><use href="#marker" x="1814" y="1509" width="110" height="90"/><use href="#marker" x="1836" y="1527.500" width="110" height="90"/></g>
</svg>
<div class="zoom"><span>+</span><span>−</span></div>
</div>
</body>
</html>
```
FILE: styles.css
```css
html { overflow: hidden; }
body { margin: 0; padding: 40px 40px 0; box-sizing: border-box; height: 1552px; overflow: hidden; background: #fff; color: #000; font: 32px/36px "Liberation Sans", Arial, sans-serif; }
.sprite { position: absolute; width: 0; height: 0; }
h1 { margin: 0 0 44px; font-size: 64px; line-height: 72px; }
h2 { margin: 41px 0 39px; font-size: 48px; line-height: 54px; }
p { margin: 0; }
h2:last-of-type { margin-bottom: 37px; }
.forecast { width: 2800px; table-layout: fixed; border-collapse: collapse; text-align: center; }
.label-col { width: 775px; }
.forecast th, .forecast td { border: 2px solid #ddd; padding: 16px; height: 37px; line-height: 37px; }
.forecast th { background: #f4f4f4; padding: 15px 16px 17px; }
.forecast .tall td { height: 60px; }
.forecast .tall td:first-child { padding: 15px 16px 17px; }
.icon { width: 60px; height: 60px; vertical-align: middle; }

.map { position: relative; box-sizing: border-box; width: 2248px; height: 668px; margin-left: 276px; border: 4px solid #2860c8; border-bottom: 0; border-radius: 8px 8px 0 0; overflow: hidden; background: #ddd; }
.map-canvas { display: block; width: 2240px; height: 664px; }
.zoom { position: absolute; left: 20px; top: 20px; width: 60px; border: 4px solid rgba(0, 0, 0, .2); border-radius: 8px; background-clip: padding-box; }
.zoom span { display: block; box-sizing: border-box; height: 60px; background: #fff; text-align: center; font-weight: bold; font-size: 46px; line-height: 63px; text-indent: 1px; }
.zoom span:first-child { height: 62px; line-height: 66px; border-bottom: 2px solid #ccc; border-radius: 4px 4px 0 0; }
.zoom span:last-child { border-radius: 0 0 4px 4px; }

.tile { overflow: hidden; }
.tile path { vector-effect: non-scaling-stroke; stroke-linejoin: round; }
.forest { fill: #b3cfa2; }
.quarry { fill: #b5c49a; }
.grass { fill: #d2eab4; }
.farm { fill: #eef0d8; }
.land { fill: #f1eee8; }
.urban { fill: #dfdfdf; }
.indus { fill: #e8dae6; }
.retail { fill: #f6d6d1; }
.park { fill: #cdf8ce; }
.school { fill: #fefbdc; stroke: #efe6a0; }
.pitch { fill: #9fdfc1; }
.water { fill: #b0d2de; }
.aero { fill: #e8e6e2; }
.peak { fill: #c4935a; }
.mine { fill: none; stroke: #e4e2e2; stroke-width: 2.500; }
.tree { fill: none; stroke: #92b386; stroke-width: 4.500; }
.trees, .firs { fill: none; stroke: none; }
.trees { marker: url(#tree); }
.firs { marker: url(#fir); }
.trail, .limit, .track, .stream, .river, .canal, .cycle, .bluedash, .dots, .rail, .raildash, .grayrail, .lane, .road, .case, .yel, .casey, .orange, .caseo, .motor { fill: none; }
.trail { stroke: #b69a55; stroke-width: 1.800; stroke-dasharray: 11 5; }
.track { stroke: #b0984f; stroke-width: 2; }
.limit { stroke: #b49cb4; stroke-width: 2.500; stroke-dasharray: 12 4 3 4 3 4; }
.stream { stroke: #a5cbe0; stroke-width: 3; }
.river { stroke: #b0d2de; stroke-width: 17; }
.river.narrow { stroke-width: 7; }
.canal { stroke: #b0d2de; stroke-width: 7; }
.cycle { stroke: #4a4af0; stroke-width: 3; stroke-dasharray: 3 5; }
.bluedash { stroke: #70a5d8; stroke-width: 2.500; }
.dots { stroke: #666; stroke-width: 4; stroke-dasharray: 4 8; }
.rail { stroke: #777; stroke-width: 7; }
.raildash { stroke: #ccc; stroke-width: 2.500; stroke-dasharray: 12 8; }
.grayrail { stroke: #b5b5b5; stroke-width: 5; }
.lane { stroke: #fff; stroke-width: 2.800; }
.case { stroke: #bdbdbd; }
.lane.case { stroke: #bdbdbd; stroke-width: 5; }
.road { stroke: #fff; }
.case.minor { stroke-width: 6.500; }
.road.minor { stroke-width: 4.800; }
.case.mid { stroke-width: 9; }
.road.mid { stroke-width: 7; }
.casey { stroke: #c5c886; }
.yel { stroke: #f7f9bf; }
.caseo { stroke: #c09352; }
.orange { stroke: #f6d2a3; }
.casey.mid, .caseo.mid { stroke-width: 11; }
.yel.mid, .orange.mid { stroke-width: 8.500; }
.caseo.thinr { stroke-width: 6; }
.orange.thinr { stroke-width: 4; }
.motor { stroke: #dc94a0; stroke-width: 13; }
.motor.wide { stroke-width: 16; }
.motor.thin { stroke-width: 6; }

.shield text, .place text, .label text { font-family: "Noto Sans", sans-serif; text-anchor: middle; paint-order: stroke; stroke-linejoin: round; }
.shield text { font-size: 20px; }
.shield { fill: #444; }
.shield rect { stroke-width: 2; }
.sw rect { fill: #f3f3f3; stroke: #bbb; }
.sy rect { fill: #f1f2d8; stroke: #bfc196; }
.so rect { fill: #f3e4d1; stroke: #cdb18a; }
.place text { font-size: 21px; fill: #444; stroke: rgba(255, 255, 255, .7); stroke-width: 3px; }
.label text { font-size: 19px; stroke: rgba(255, 255, 255, .65); stroke-width: 3px; }
.hill text { fill: #92704f; }
.airfield text { fill: #8062c0; font-style: italic; }
.exit text { fill: #b5404c; }
.curve { font: 17px "Noto Sans", sans-serif; paint-order: stroke; stroke-width: 2px; }
.curve.dark { fill: #433; stroke: rgba(220, 148, 160, .7); }
.curve.blue { fill: #6499cc; stroke: rgba(255, 255, 255, .6); font-style: italic; }
```
